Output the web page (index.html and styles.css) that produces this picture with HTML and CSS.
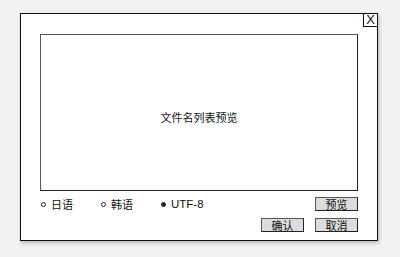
FILE: index.html
```html
<!DOCTYPE html>
<html lang="zh-CN">
<head>
    <meta charset="UTF-8">
    <meta name="viewport" content="width=device-width, initial-scale=1.0">
    <title>文件名预览</title>
    <link rel="stylesheet" href="styles.css">
</head>
<body>
    <div class="dialog">
        <div class="close-btn">X</div>

        <div class="preview-box">文件名列表预览</div>

        <div class="row">
            <div class="radios">
                <label class="radio"><span class="dot"></span>日语</label>
                <label class="radio"><span class="dot"></span>韩语</label>
                <label class="radio"><span class="dot checked"></span><span class="latin">UTF-8</span></label>
            </div>
            <button class="btn">预览</button>
        </div>

        <div class="row row-end">
            <button class="btn">确认</button>
            <button class="btn">取消</button>
        </div>
    </div>
</body>
</html>
```

FILE: styles.css
```css
body {
    font-family: "Noto Sans CJK SC", "Liberation Sans", sans-serif;
    margin: 0;
    padding: 0;
    height: 100vh;
    overflow: hidden;
    background-color: #f3f3f3;
    color: #111;
}

.dialog {
    position: relative;
    box-sizing: border-box;
    width: 358px;
    height: 228px;
    margin: 13px 0 0 20px;
    padding: 20px 19px 0 19px;
    background-color: #fff;
    border: 1px solid #111;
    box-shadow: 1px 2px 4px rgba(0, 0, 0, 0.25);
}

/* close button sits over the corner */
.close-btn {
    position: absolute;
    top: -1px;
    right: -1px;
    box-sizing: border-box;
    width: 15px;
    height: 14px;
    border: 1px solid #111;
    background-color: #fff;
    font-family: "Liberation Sans", sans-serif;
    font-size: 13px;
    line-height: 12px;
    text-align: center;
}

.preview-box {
    box-sizing: border-box;
    height: 157px;
    padding-top: 9px;
    border: 1px solid #222;
    border-top-color: #555;
    border-left-color: #555;
    display: flex;
    align-items: center;
    justify-content: center;
    font-size: 11px;
}

.row {
    display: flex;
    align-items: center;
    justify-content: space-between;
    height: 14px;
    margin-top: 6px;
}

.row-end {
    justify-content: flex-end;
    gap: 11px;
    margin-top: 7px;
}

.radios {
    display: flex;
    align-items: center;
    gap: 28px;
    padding-left: 1px;
}

.radio {
    display: flex;
    align-items: center;
    gap: 5px;
    font-size: 11px;
}

.latin {
    font-family: "Liberation Sans", sans-serif;
    font-size: 11.5px;
}

.dot {
    box-sizing: border-box;
    width: 5px;
    height: 5px;
    border: 1px solid #222;
    border-radius: 50%;
}

.dot.checked {
    background-color: #222;
}

.btn {
    box-sizing: border-box;
    width: 43px;
    height: 14px;
    padding: 0;
    background-color: #dcdcdc;
    border: 1px solid #222;
    border-top-color: #555;
    border-left-color: #555;
    font-family: inherit;
    font-size: 11px;
    line-height: 12px;
    color: #111;
}
```
